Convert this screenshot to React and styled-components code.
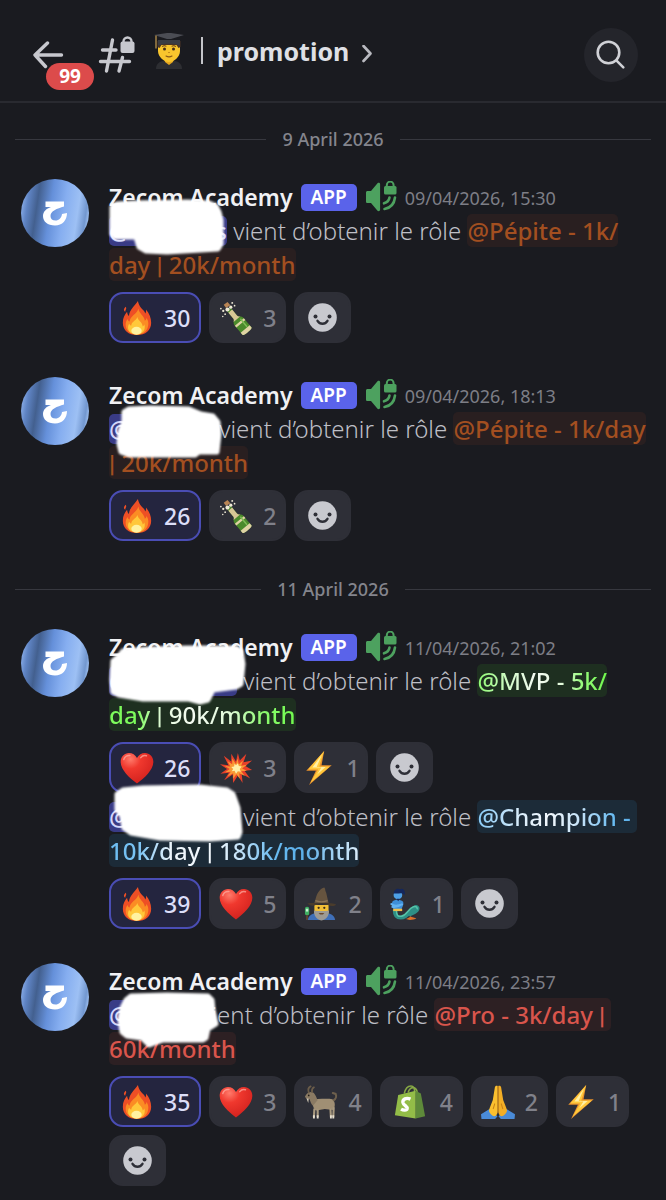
import React, { useState } from 'react';
import styled, { createGlobalStyle, css } from 'styled-components';

const GlobalStyle = createGlobalStyle`
  * {
    box-sizing: border-box;
  }

  body {
    margin: 0;
    background: #1a1b20;
    color: #bebfc6;
    font-family: 'Noto Sans', 'Open Sans', sans-serif;
  }

  button {
    font: inherit;
    color: inherit;
    cursor: pointer;
  }
`;

const Page = styled.div`
  min-height: 100vh;
  padding-bottom: 14px;
`;

const Header = styled.header`
  display: flex;
  align-items: center;
  height: 103px;
  padding: 8px 28px 0 32px;
  border-bottom: 2px solid #292a30;
`;

const PlainButton = styled.button`
  display: flex;
  align-items: center;
  position: relative;
  padding: 0;
  border: 0;
  background: none;
`;

const UnreadBadge = styled.span`
  position: absolute;
  top: 22px;
  left: 14px;
  width: 48px;
  border-radius: 14px;
  background: #dc4b4b;
  color: #fff;
  font-size: 19px;
  font-weight: 700;
  line-height: 27px;
  text-align: center;
`;

const ChannelButton = styled(PlainButton)`
  flex: 1;
  margin-left: 34px;
`;

const ChannelName = styled.h1`
  display: flex;
  align-items: center;
  gap: 14px;
  margin: 0 12px 0 18px;
  padding-bottom: 8px;
  color: #dfe0e5;
  font-size: 25px;
  font-weight: 700;
  line-height: 36px;
`;

const Bar = styled.span`
  width: 2px;
  height: 27px;
  margin-left: 3px;
  background: #c4c5ca;
`;

const SearchButton = styled(PlainButton)`
  justify-content: center;
  width: 54px;
  height: 54px;
  border-radius: 50%;
  background: #24252b;
`;

const DateDivider = styled.div`
  display: flex;
  align-items: center;
  gap: 16px;
  margin: 38px 15px 31px;
  color: #84858d;
  font-size: 18px;
  font-weight: 500;
  line-height: 20px;

  &:first-child {
    margin-top: 26px;
  }

  &::before,
  &::after {
    content: '';
    flex: 1;
    height: 1px;
    background: #37383f;
  }
`;

const MessageRow = styled.article`
  display: flex;
  align-items: flex-start;
  gap: 20px;
  padding: 0 16px 0 21px;

  & + & {
    margin-top: 35px;
  }
`;

const AvatarImage = styled.svg`
  flex: none;
  margin-top: -1px;
`;

const MessageBody = styled.div`
  flex: 1;
  min-width: 0;
`;

const MessageHead = styled.div`
  display: flex;
  align-items: center;
  gap: 8px;
  height: 34px;
`;

const Author = styled.h2`
  margin: 0;
  color: #f0f1f4;
  font-size: 23px;
  font-weight: 600;
  line-height: 34px;
`;

const AppTag = styled.span`
  padding: 0 10px;
  border-radius: 5px;
  background: #5a63ea;
  color: #fff;
  font-size: 19px;
  font-weight: 600;
  line-height: 27px;
`;

const Time = styled.time`
  color: #7d7e86;
  font-size: 18px;
  line-height: 34px;
  padding-top: 2px;
`;

const Text = styled.p`
  margin: 0;
  font-size: 24px;
  font-weight: 300;
  line-height: 34px;
`;

const UserMention = styled.span`
  display: inline-flex;
  justify-content: space-between;
  position: relative;
  width: ${(p) => p.$width}px;
  height: 30px;
  margin-bottom: 2px;
  border-radius: 5px;
  background: #393b86;
  color: #d3d6fb;
  font-weight: 500;
  line-height: 30px;
  vertical-align: bottom;
`;

const Scribble = styled.svg`
  position: absolute;
  top: 0;
  left: 0;
  overflow: visible;
  filter: blur(1px);
`;

const roleColors = {
  pepite: css`
    background: #291f20;
    color: #a34f20;
  `,
  pro: css`
    background: #2d2023;
    color: #d9554c;
  `,
  mvp: css`
    background: #1e2f20;
    color: #7dfb5c;
  `,
  champion: css`
    background: #1c2b38;
    color: #6abcf2;
  `,
};

const RoleMention = styled.span`
  border-radius: 5px;
  font-weight: 500;
  white-space: nowrap;
  ${(p) => roleColors[p.$role]}
`;

const Shine = styled.span`
  background: linear-gradient(90deg, ${(p) => p.$stops});
  background-clip: text;
  color: transparent;
`;

const Pipe = styled.span`
  font-family: Roboto, sans-serif;
  font-weight: 700;
  line-height: 1;
`;

const Reactions = styled.div`
  display: flex;
  flex-wrap: wrap;
  gap: 8px;
  margin: 10px 0 7px;

  &:last-child {
    margin-bottom: 0;
  }
`;

const Pill = styled.button`
  display: flex;
  align-items: center;
  gap: 10px;
  height: 51px;
  padding: 0 ${(p) => (p.$active ? 9 : p.$narrow ? 6 : 8)}px;
  border: 2px solid ${(p) => (p.$active ? '#4a4db4' : '#2e2f37')};
  border-radius: 14px;
  background: ${(p) => (p.$active ? '#24253f' : '#2e2f37')};
  color: ${(p) => (p.$active ? '#dcdef8' : '#80818a')};
  font-size: 23px;
  font-weight: 500;
  line-height: 32px;
`;

const AddReaction = styled(Pill)`
  justify-content: center;
  width: 57px;
`;

function BackIcon() {
  return (
    <svg width="32" height="28" viewBox="0 0 32 28" fill="none" stroke="#c7c8ce" strokeWidth="3.4" strokeLinecap="round" strokeLinejoin="round">
      <path d="M15.500 2L3 14l10.500 11.500M3 14h26.500" />
    </svg>
  );
}

function LockedHashIcon() {
  return (
    <svg width="38" height="38" viewBox="0 0 38 38">
      <g fill="none" stroke="#c7c8ce" strokeWidth="3.4" strokeLinecap="round">
        <path d="M14.500 4L8.500 35M24.500 21.500L21 35M4.500 14h13.500M2.500 25.500h29" />
      </g>
      <path d="M25.500 8V5.500a4 4 0 0 1 8 0V8" fill="none" stroke="#c7c8ce" strokeWidth="2.4" />
      <rect x="22.500" y="5.500" width="14" height="11.500" rx="2" fill="#c7c8ce" />
    </svg>
  );
}

function GraduateIcon() {
  return (
    <svg width="30" height="38" viewBox="0 0 30 38">
      <path d="M2 37c0-6 4-8.500 13-8.500S28 31 28 37z" fill="#2d2e32" />
      <path d="M10 25h10l-1 5-4 3-4-3z" fill="#e8a81e" />
      <path d="M4 11v8c0 6 6 11 11 11s11-5 11-11v-8z" fill="#f8c52d" />
      <path d="M3.500 9h23v6l-2 1-2-3H7.500l-2 3-2-1z" fill="#4a3426" />
      <path d="M4 8h22v5.500c-6-2.500-16-2.500-22 0z" fill="#3a3c43" />
      <path d="M0 3l13-2h4l13 2-13 4h-4z" fill="#4b4d54" />
      <path d="M2 3.500v13" stroke="#b08b4a" strokeWidth="1.4" />
      <circle cx="10.500" cy="17" r="1.500" fill="#452f1c" />
      <circle cx="19.500" cy="17" r="1.500" fill="#452f1c" />
      <path d="M8.500 14.500c1-1 2.500-1 3.500-.3M18 14.200c1-.7 2.500-.7 3.500.3M12 24c2 1.200 4 1.200 6 0" fill="none" stroke="#8a5a18" strokeWidth="1.1" strokeLinecap="round" />
      <path d="M14 20.500h2" stroke="#c98f1c" strokeWidth="1.2" />
    </svg>
  );
}

function ChevronIcon() {
  return (
    <svg width="12" height="20" viewBox="0 0 12 20" fill="none" stroke="#b9bac0" strokeWidth="2.6" strokeLinecap="round" strokeLinejoin="round">
      <path d="M2.500 1l7 7.500-7 7.500" />
    </svg>
  );
}

function SearchIcon() {
  return (
    <svg width="30" height="30" viewBox="0 0 30 30" fill="none" stroke="#d0d1d6" strokeWidth="2.6" strokeLinecap="round">
      <circle cx="12.500" cy="12.500" r="10.800" />
      <path d="M20.300 20.300l7 7" />
    </svg>
  );
}

function VoiceLockIcon() {
  return (
    <svg width="32" height="32" viewBox="0 0 32 32" fill="#4da15f">
      <path d="M1 11.500c0-1 .6-1.600 1.600-1.600H6L12.500 2.300c.9-.9 2.600-.4 2.600.9v25.600c0 1.300-1.700 1.800-2.600.9L6 22H2.600C1.600 22 1 21.400 1 20.400z" />
      <rect x="19" y="5" width="12.500" height="8.500" rx="1.500" />
      <path d="M21.800 5.500V4a3.400 3.400 0 0 1 6.800 0v1.500" fill="none" stroke="#4da15f" strokeWidth="2" />
      <path d="M24.500 16.500c-.5 3-2.500 5-5.500 5.800M30 16.500c-.8 6.500-4.500 10.500-10.500 11.500" fill="none" stroke="#4da15f" strokeWidth="2.6" strokeLinecap="round" />
    </svg>
  );
}

function Avatar() {
  return (
    <AvatarImage width="68" height="68" viewBox="0 0 68 68" role="img" aria-label="Zecom Academy">
      <defs>
        <linearGradient id="avatarFill" x1="0" y1="0.450" x2="1" y2="0.600">
          <stop offset="0" stopColor="#85a9e4" />
          <stop offset="0.080" stopColor="#5f84c4" />
          <stop offset="0.220" stopColor="#43608f" />
          <stop offset="0.420" stopColor="#6590da" />
          <stop offset="0.620" stopColor="#86aef0" />
          <stop offset="0.820" stopColor="#9dc0f4" />
          <stop offset="0.940" stopColor="#7297cf" />
          <stop offset="1" stopColor="#a5c6f5" />
        </linearGradient>
      </defs>
      <circle cx="34" cy="34" r="34" fill="url(#avatarFill)" />
      <path
        d="M24.500 22.500H43V27.500C36 29.500 29.500 32 29.500 37C29.500 40 31.500 41.500 34.500 41.500C38 41.500 40.500 39 41 35L46 34C46 41 41.500 46.500 34 46.500C26.500 46.500 22 42.500 22 37C22 32.500 25.500 29.500 30 28H24.500Z"
        fill="#fff"
      />
    </AvatarImage>
  );
}

const emojis = {
  fire: (
    <>
      <path d="M19 0c1 5 3 7 6 10 1 1 1.500 2 1.600 3.300 1-1 1.200-2.500.9-4.300C31 13 33 18 33 23c0 8-6 13-15 13S3 31 3 23c0-5 2-8.500 4.500-11.500.2 2 .8 3.500 2 4.500C10 9 15 6 19 0z" fill="#ee4f25" />
      <path d="M6 6c1.600 2-.6 3.500-.4 5.500C3 9.500 4.500 7.500 6 6z" fill="#ee4f25" />
      <path d="M19.500 8c.3 5 6.500 8 6.800 13 1-.6 1.500-1.600 1.700-3 1.500 2 2 4 2 6 0 7-5 11.500-12 11.500S6 31.500 6 25c0-2.500.8-4.500 2-6 .4 1.500 1 2.300 2.200 2.800C10.500 16 18 14 19.500 8z" fill="#fb8c24" />
      <path d="M18.500 17c.3 4 5.500 5.500 5.500 10 1-.5 1.500-1.300 1.700-2.300 2 5.300-1.700 10.800-7.700 10.800S8.500 32 8.500 28c0-1.500.5-3 1.300-4 .4 1.200 1.200 1.900 2.200 2 0-4 5-5 6.500-9z" fill="#ffc83a" />
      <ellipse cx="17.500" cy="31.500" rx="5.500" ry="4.200" fill="#fff2a0" />
    </>
  ),
  bottle: (
    <>
      <g transform="translate(10 8.500) rotate(-40)">
        <path d="M-2.600 0h5.200v11c0 2.500 3.600 3 3.600 6.500v13c0 2-12.400 2-12.400 0v-13c0-3.500 3.600-4 3.600-6.500z" fill="#4b8a2b" />
        <path d="M-2.600 3h5.200v8c0 1.500 1 2.200 2 3h-9.200c1-.8 2-1.500 2-3z" fill="#d8c795" />
        <path d="M-6.200 18h12.400v2.500H-6.200zM-6.200 27.500h12.400v3.200c0 1.800-12.400 1.800-12.400 0z" fill="#e0d3a4" />
        <path d="M3 16v11" stroke="#7fbd55" strokeWidth="1.500" />
      </g>
      <path d="M5 4l4-3 3 3.500-4.500 3z" fill="#b98555" />
      <g fill="#efe9d6">
        <circle cx="9" cy="9" r="2.200" />
        <circle cx="12.500" cy="6.500" r="1.700" />
        <circle cx="14" cy="2" r="1" />
        <circle cx="4.500" cy="10.500" r="1.200" />
        <circle cx="6.500" cy="14" r="0.900" />
        <circle cx="2" cy="8" r="0.900" />
        <circle cx="16.500" cy="5" r="0.900" />
        <circle cx="4" cy="16.500" r="0.800" />
      </g>
    </>
  ),
  heart: (
    <>
      <defs>
        <radialGradient id="heartFill" cx="0.300" cy="0.200" r="0.900">
          <stop offset="0" stopColor="#ff7b6b" />
          <stop offset="0.350" stopColor="#f0382e" />
          <stop offset="1" stopColor="#cf1f1c" />
        </radialGradient>
      </defs>
      <path d="M18 34.500C10 28.500.7 20 .7 11.500.7 6 4.700 2.200 9.500 2.200c3.600 0 6.800 2 8.500 5.300 1.700-3.300 4.900-5.300 8.500-5.300 4.800 0 8.800 3.800 8.800 9.300C35.300 20 26 28.500 18 34.500z" fill="url(#heartFill)" />
      <path d="M4 9c1-3 3.500-4.500 6.500-4.200M22 7c1.500-2 4-2.600 6-2" fill="none" stroke="#ffb0a5" strokeWidth="1.600" strokeLinecap="round" opacity="0.700" />
    </>
  ),
  boom: (
    <>
      <path d="M18 11l2-9 2 8 7-7-3 9 9-2-7 6 7 4-8 1 6 8-9-5 1 10-5-8-5 8-.500-9-9 6 5-8-9 1 7-5L1 14l9 1L5 5l8 6 0-8z" fill="#e8402a" />
      <path d="M18 14l1.500-6 1.500 6 4.500-4-2 5.500 6-1-5 4 5 2.500-6 .5 4 5-6-3 .5 6-3.500-5-3.500 5v-6l-6 3.500 3.500-5-6 .5 5-3.500-5.500-3 6 .5-3-6 5 3.500V8z" fill="#fb9a35" />
      <path d="M18 15l2-2 1 3 3 .5-2 2.500 1 3-3-.5-2 2.500-1.500-3-3 .5 1.500-2.500-2-2 3-.5.500-3z" fill="#fff0a8" />
    </>
  ),
  zap: (
    <>
      <path d="M23.500 0L4.500 21h10.200L7.500 36 31.500 15H20.700z" fill="#e8912d" />
      <path d="M23.500 0L6.500 19.500h10.500L9 33.500 29.500 16.300H18.300z" fill="#ffc93c" />
      <path d="M21 4l-10 13.500h9.500l-4.500 7.500 9-8h-9.500z" fill="#fff0a6" />
    </>
  ),
  mage: (
    <>
      <path d="M4 35c1-6 6-8 14.500-8S32 29 33 35z" fill="#3f6fb8" />
      <path d="M11 19h15v7c0 4-3 6-7.500 6S11 30 11 26z" fill="#f2bf36" />
      <path d="M10.500 25c2 .5 4 .5 8 .5s6 0 8-.5c0 5.500-2.500 9.500-8 10.500-5.500-1-8-5-8-10.500z" fill="#9d9a94" />
      <path d="M15.500 27.500h6l-1.500 1.500h-3z" fill="#6b4a30" />
      <circle cx="15.500" cy="22" r="1.200" fill="#3a2a1a" />
      <circle cx="21.500" cy="22" r="1.200" fill="#3a2a1a" />
      <path d="M13 10c1.500-4 4-8.500 8.500-9.500 1.300 1 .5 3 2 5.500l2.500 11H11z" fill="#66543f" />
      <path d="M3.500 17.500c6-1 8 0 15 0s10-1 15.500 1c-2 2.500-6 1.500-8.500.5-5-1.500-9-1.500-13 0-3.500 1.500-7 .5-9-1.500z" fill="#4a3c2c" />
      <path d="M12 14.500c4 1.500 9 1.500 13 0" fill="none" stroke="#8d7656" strokeWidth="1.400" />
      <rect x="1" y="21" width="4.500" height="9" rx="2" fill="#3fae62" />
      <path d="M2 23h2.500v3H2z" fill="#c8f0d2" />
      <path d="M3.200 30v5" stroke="#6e4a2c" strokeWidth="1.600" />
    </>
  ),
  genie: (
    <>
      <path d="M7 24c0 6 2 8.500 6.500 8.500 8 0 9-7.500 14-10.500 3-1.800 4.500-.3 3.500 2-1.200 3-6 3.500-9 6" fill="none" stroke="#2d8f86" strokeWidth="4" />
      <path d="M9 25c0 5 1.500 6.500 5 6 6-1 7-8 13-10 3-1 4.500.8 3.800 2.700" fill="none" stroke="#56c3a8" strokeWidth="1.600" />
      <path d="M4.500 15.500c3-2.500 8-2.500 11.500 0 1 3.500-1 6-2 8.500H6.500c-2-2-3-5-2-8.500z" fill="#3e8fd8" />
      <path d="M3.500 18c3 3 7 2 11.500.5M4.500 21c3 .5 7-.5 10-2.500" fill="none" stroke="#62b2f0" strokeWidth="2" strokeLinecap="round" />
      <circle cx="10.500" cy="8.500" r="4.600" fill="#4da0e6" />
      <path d="M6 7c0-4 4-6.500 7-4.500 2-1.500 4 0 4.500 2s1 3-.5 4c0-1.500-2-2-3.500-2-3 .5-5 .5-7.500.5z" fill="#14275c" />
      <path d="M9 12.500h3.500L10.800 15z" fill="#14275c" />
      <path d="M5.500 23h9.500v2.500H5.500z" fill="#f0c04a" />
      <path d="M19 34c3-1.500 4-2 5-3 1 1 3 1.500 6 2-2 1.800-8 2.500-11 1z" fill="#d9702c" />
    </>
  ),
  goat: (
    <>
      <path d="M9 14.500c6 1 14-.5 21 .5 2 1.500 3 4 2.500 7.500l-1.500 4-9-1-9 1.500C10 26 8.500 20 9 14.500z" fill="#a08f74" />
      <path d="M2 10.500c1.500-2 4-3.500 6.500-3 3 1 4 4.500 6 8.500l-5 6c-2-2-3-5-3.500-7C4 15.500 2 14 1 12.500z" fill="#8a7a63" />
      <path d="M5 8C4 5 5 2.500 7 1.500M8.500 7.500c-.5-2.500.5-4 2-5" fill="none" stroke="#6b5d4a" strokeWidth="1.900" strokeLinecap="round" />
      <path d="M2.500 14l2 5 .5-4.500z" fill="#cfc6b4" />
      <path d="M11 25l-.500 9M14.500 26v8M28 25l.500 9M31.500 23.500l-.500 10.500" stroke="#a99a80" strokeWidth="2.200" />
      <path d="M10.500 32v3.500M14.500 32v3.500M28.500 32v3.500M31 32v3.500" stroke="#e6dfd0" strokeWidth="2" />
      <path d="M31.500 16c2.500-1.500 3-4.500 2-6.500l-3-1" fill="none" stroke="#6e604d" strokeWidth="2.200" strokeLinecap="round" />
      <circle cx="5" cy="11" r="0.900" fill="#221c16" />
    </>
  ),
  shopify: (
    <>
      <path d="M12 9c1-5 4-8 7-8s4 3 4 7M16 8c1-4 4-6 6.500-5 2 1 3 3 3 5" fill="none" stroke="#86a845" strokeWidth="1.700" />
      <path d="M5.500 10.500L24 6v29.500L2 32z" fill="#93bd48" />
      <path d="M24 6l5.500 3L34 33l-10 2.500z" fill="#5e8a3a" />
      <path d="M18.500 15c-4.500-2-8.500 0-8 3.500.5 3 5 4 4.500 6.500-.5 2-4 2-6.500.5" fill="none" stroke="#fff" strokeWidth="3.600" />
    </>
  ),
  pray: (
    <>
      <path d="M0 31l9-5.500L17.500 33l-2.500 3H.5zM36 31l-9-5.500L18.500 33l2.500 3h14.500z" fill="#4a8bd8" />
      <path d="M17.700 1c-1.500-.8-2.800 0-3 1.500L12.500 16 9 25c-1 2.500-.5 4 1.500 6s4 2.800 5.700 1c1-1.200 1.500-3 1.500-5z" fill="#fbc02f" />
      <path d="M18.300 1c1.500-.8 2.800 0 3 1.500L23.500 16 27 25c1 2.500.5 4-1.500 6s-4 2.800-5.700 1c-1-1.200-1.500-3-1.500-5z" fill="#f3ae25" />
      <path d="M18 2v27M14.500 20l-1.500 5M21.500 20l1.500 5" fill="none" stroke="#c98217" strokeWidth="1.100" strokeLinecap="round" />
    </>
  ),
};

function Emoji({ name }) {
  return (
    <svg width={name === 'shopify' ? 40 : 34} height="34" viewBox="0 0 36 36" role="img" aria-label={name}>
      {emojis[name]}
    </svg>
  );
}

function SmileIcon() {
  return (
    <svg width="29" height="29" viewBox="0 0 29 29">
      <circle cx="14.500" cy="14.500" r="14.300" fill="#c8c9cf" />
      <circle cx="7.500" cy="13.500" r="2" fill="#2e2f37" />
      <circle cx="21.500" cy="13.500" r="2" fill="#2e2f37" />
      <path d="M9.500 17.800c2.500 4 7.500 4 10 0" fill="none" stroke="#2e2f37" strokeWidth="2.400" strokeLinecap="round" />
    </svg>
  );
}

function Reaction({ emoji, count, mine }) {
  const [active, setActive] = useState(Boolean(mine));
  const total = count + (active ? 1 : 0) - (mine ? 1 : 0);

  return (
    <Pill type="button" $active={active} $narrow={count === 1} aria-pressed={active} onClick={() => setActive(!active)}>
      <Emoji name={emoji} />
      {total}
    </Pill>
  );
}

function ReactionList({ items }) {
  return (
    <Reactions>
      {items.map(([emoji, count, mine]) => (
        <Reaction key={emoji} emoji={emoji} count={count} mine={mine} />
      ))}
      <AddReaction type="button" aria-label="Add reaction">
        <SmileIcon />
      </AddReaction>
    </Reactions>
  );
}

function RoleLine({ text }) {
  const [before, after] = text.split('|');
  if (after === undefined) return text;

  return (
    <>
      {before}
      <Pipe>|</Pipe>
      {after}
    </>
  );
}

function Entry({ mention, role, lines, shine, reactions }) {
  return (
    <>
      <Text>
        <UserMention $width={mention.width}>
          <span>@</span>
          {mention.tail && <span>{mention.tail}</span>}
          <Scribble width="1" height="1" aria-hidden="true">
            <polygon points={mention.cover} fill="#fff" stroke="#fff" strokeWidth="5" strokeLinejoin="round" />
          </Scribble>
        </UserMention>
        {' vient d’obtenir le rôle '}
        {lines.map((line, i) => (
          <React.Fragment key={line}>
            {i > 0 && <br />}
            <RoleMention $role={role}>
              {shine ? (
                <Shine $stops={shine[i]}>
                  <RoleLine text={line} />
                </Shine>
              ) : (
                <RoleLine text={line} />
              )}
            </RoleMention>
          </React.Fragment>
        ))}
      </Text>
      <ReactionList items={reactions} />
    </>
  );
}

function Message({ time, entries }) {
  return (
    <MessageRow>
      <Avatar />
      <MessageBody>
        <MessageHead>
          <Author>Zecom Academy</Author>
          <AppTag>APP</AppTag>
          <VoiceLockIcon />
          <Time>{time}</Time>
        </MessageHead>
        {entries.map((entry) => (
          <Entry key={entry.lines[0]} {...entry} />
        ))}
      </MessageBody>
    </MessageRow>
  );
}

const days = [
  {
    date: '9 April 2026',
    messages: [
      {
        time: '09/04/2026, 15:30',
        entries: [
          {
            mention: {
              width: 118,
              tail: 's',
              cover: '3,-9 8,-12 24,-13 78,-14 100,-13 107,-10 110,-4 112,4 112,28 109,33 58,36 37,35 30,31 27,21 6,21 3,18',
            },
            role: 'pepite',
            lines: ['@Pépite - 1k/', 'day | 20k/month'],
            reactions: [['fire', 30, true], ['bottle', 3]],
          },
        ],
      },
      {
        time: '09/04/2026, 18:13',
        entries: [
          {
            mention: {
              width: 104,
              cover: '15,-2 20,-5 41,-6 80,-5 92,0 104,2 109,8 110,20 108,38 90,38 86,41 20,41 12,38 10,30 11,18 15,7',
            },
            role: 'pepite',
            lines: ['@Pépite - 1k/day', '| 20k/month'],
            reactions: [['fire', 26, true], ['bottle', 2]],
          },
        ],
      },
    ],
  },
  {
    date: '11 April 2026',
    messages: [
      {
        time: '11/04/2026, 21:02',
        entries: [
          {
            mention: {
              width: 128,
              cover: '9,-9 14,-15 41,-17 78,-18 127,-18 132,-15 134,-2 132,18 127,21 104,24 99,34 91,36 80,33 34,33 10,29 4,26 3,14 4,-5',
            },
            role: 'mvp',
            lines: ['@MVP - 5k/', 'day | 90k/month'],
            shine: [
              '#8dfb70 0%, #d5fbcb 25%, #f4fbf2 45%, #e4fbdc 65%, #9afb80 80%, #6ff94c 100%',
              '#7dfb5c 0%, #7dfb5c 15%, #e4fbdc 28%, #f4fbf2 45%, #e0fbd8 65%, #8dfb70 82%, #6ff94c 100%',
            ],
            reactions: [['heart', 26, true], ['boom', 3], ['zap', 1]],
          },
          {
            mention: {
              width: 128,
              cover: '8,-8 14,-12 34,-14 91,-15 118,-12 124,-8 129,6 131,30 129,35 101,37 51,36 22,31 15,26 13,14 8,8',
            },
            role: 'champion',
            lines: ['@Champion -\u00a0', '10k/day | 180k/month'],
            shine: [
              '#86c9f6 0%, #dceefb 28%, #f2f8fd 45%, #c4e2f8 65%, #6abcf2 85%, #5aaee8 100%',
              '#6abcf2 0%, #7cc4f4 12%, #eef6fc 25%, #f2f8fd 42%, #c4e2f8 52%, #6abcf2 66%, #5aaee8 78%, #dceefb 100%',
            ],
            reactions: [['fire', 39, true], ['heart', 5], ['mage', 2], ['genie', 1]],
          },
        ],
      },
      {
        time: '11/04/2026, 23:57',
        entries: [
          {
            mention: {
              width: 85,
              cover: '17,0 22,-4 58,-5 99,-4 103,0 104,10 107,24 99,29 97,38 94,40 54,40 40,45 33,38 18,36 13,32 11,20 13,8',
            },
            role: 'pro',
            lines: ['@Pro - 3k/day |\u00a0', '60k/month'],
            reactions: [['fire', 35, true], ['heart', 3], ['goat', 4], ['shopify', 4], ['pray', 2], ['zap', 1]],
          },
        ],
      },
    ],
  },
];

export default function App() {
  return (
    <Page>
      <GlobalStyle />
      <Header>
        <PlainButton type="button" aria-label="Back">
          <BackIcon />
          <UnreadBadge>99</UnreadBadge>
        </PlainButton>
        <ChannelButton type="button">
          <LockedHashIcon />
          <ChannelName>
            <GraduateIcon />
            <Bar />
            promotion
          </ChannelName>
          <ChevronIcon />
        </ChannelButton>
        <SearchButton type="button" aria-label="Search">
          <SearchIcon />
        </SearchButton>
      </Header>
      <main>
        {days.map((day) => (
          <React.Fragment key={day.date}>
            <DateDivider>{day.date}</DateDivider>
            {day.messages.map((message) => (
              <Message key={message.time} {...message} />
            ))}
          </React.Fragment>
        ))}
      </main>
    </Page>
  );
}
